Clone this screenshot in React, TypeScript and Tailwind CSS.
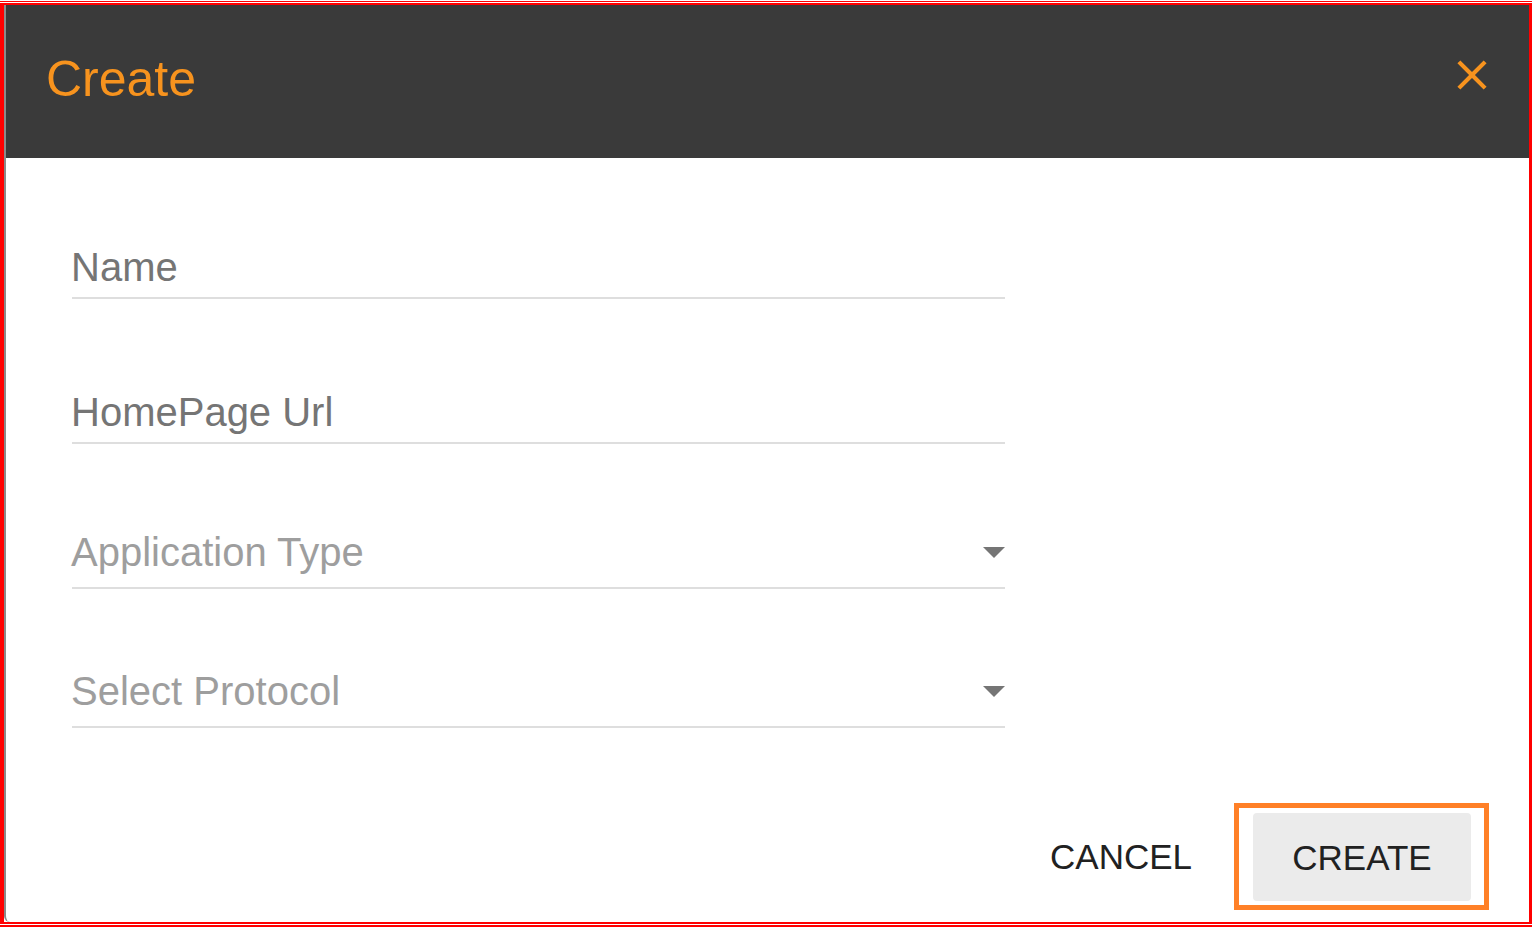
import React from "react";

const Field = ({ label, select }: { label: string; select?: boolean }) => (
	<div className="w-[933px]">
		<div className="flex h-[46px] items-center justify-between">
			<span
				className={`-ml-[1px] text-[40px] leading-[46px] ${
					select ? "text-[#9e9e9e]" : "text-[#757575]"
				}`}
			>
				{label}
			</span>
			{select && (
				<svg width="22" height="11" viewBox="0 0 22 11">
					<polygon points="0,0 22,0 11,11" fill="#757575" />
				</svg>
			)}
		</div>
		<div
			className={`h-[2px] bg-[#dedede] ${select ? "mt-[12px]" : "mt-[7px]"}`}
		/>
	</div>
);

export default function App() {
	return (
		<div className="flex h-[928px] w-[1532px] flex-col bg-white py-[1px] font-['Liberation_Sans',Arial,sans-serif]">
			<div className="h-[1px] bg-[#ff0000]" />
			<div className="mt-[1px] flex flex-1 border-b-2 border-l-4 border-r-[3px] border-t-2 border-[#ff0000]">
				<div className="flex flex-1 flex-col overflow-hidden rounded-bl-[6px] border-l-2 border-[#8a8a8a] bg-white">
					{/* header */}
					<div className="flex h-[153px] items-center justify-between bg-[#3a3a3a] pb-[6px] pl-[40px] pr-[32px]">
						<h1 className="text-[50px] leading-none text-[#f7931e]">Create</h1>
						<svg
							width="50"
							height="50"
							viewBox="0 0 24 24"
							className="mb-[7px]"
						>
							<path
								fill="#f7931e"
								d="M19 6.41L17.59 5 12 10.59 6.41 5 5 6.41 10.59 12 5 17.59 6.41 19 12 13.41 17.59 19 19 17.59 13.41 12z"
							/>
						</svg>
					</div>

					{/* form */}
					<div className="flex flex-1 flex-col pl-[66px]">
						<div className="mt-[86px]">
							<Field label="Name" />
						</div>
						<div className="mt-[90px]">
							<Field label="HomePage Url" />
						</div>
						<div className="mt-[85px]">
							<Field label="Application Type" select />
						</div>
						<div className="mt-[79px]">
							<Field label="Select Protocol" select />
						</div>

						<div className="mt-[75px] flex items-center justify-end gap-[26px] pr-[40px]">
							<button className="px-[16px] py-[10px] text-[35px] leading-none text-[#212121]">
								CANCEL
							</button>
							<div className="border-[5px] border-[#ff8027] pb-[4px] pl-[14px] pr-[13px] pt-[5px]">
								<button className="flex h-[88px] w-[218px] items-center justify-center rounded-[4px] bg-[#ebebeb] text-[35px] leading-none text-[#212121]">
									CREATE
								</button>
							</div>
						</div>
					</div>
				</div>
			</div>
			<div className="mt-[1px] h-[2px] bg-[#ff0000]" />
		</div>
	);
}
